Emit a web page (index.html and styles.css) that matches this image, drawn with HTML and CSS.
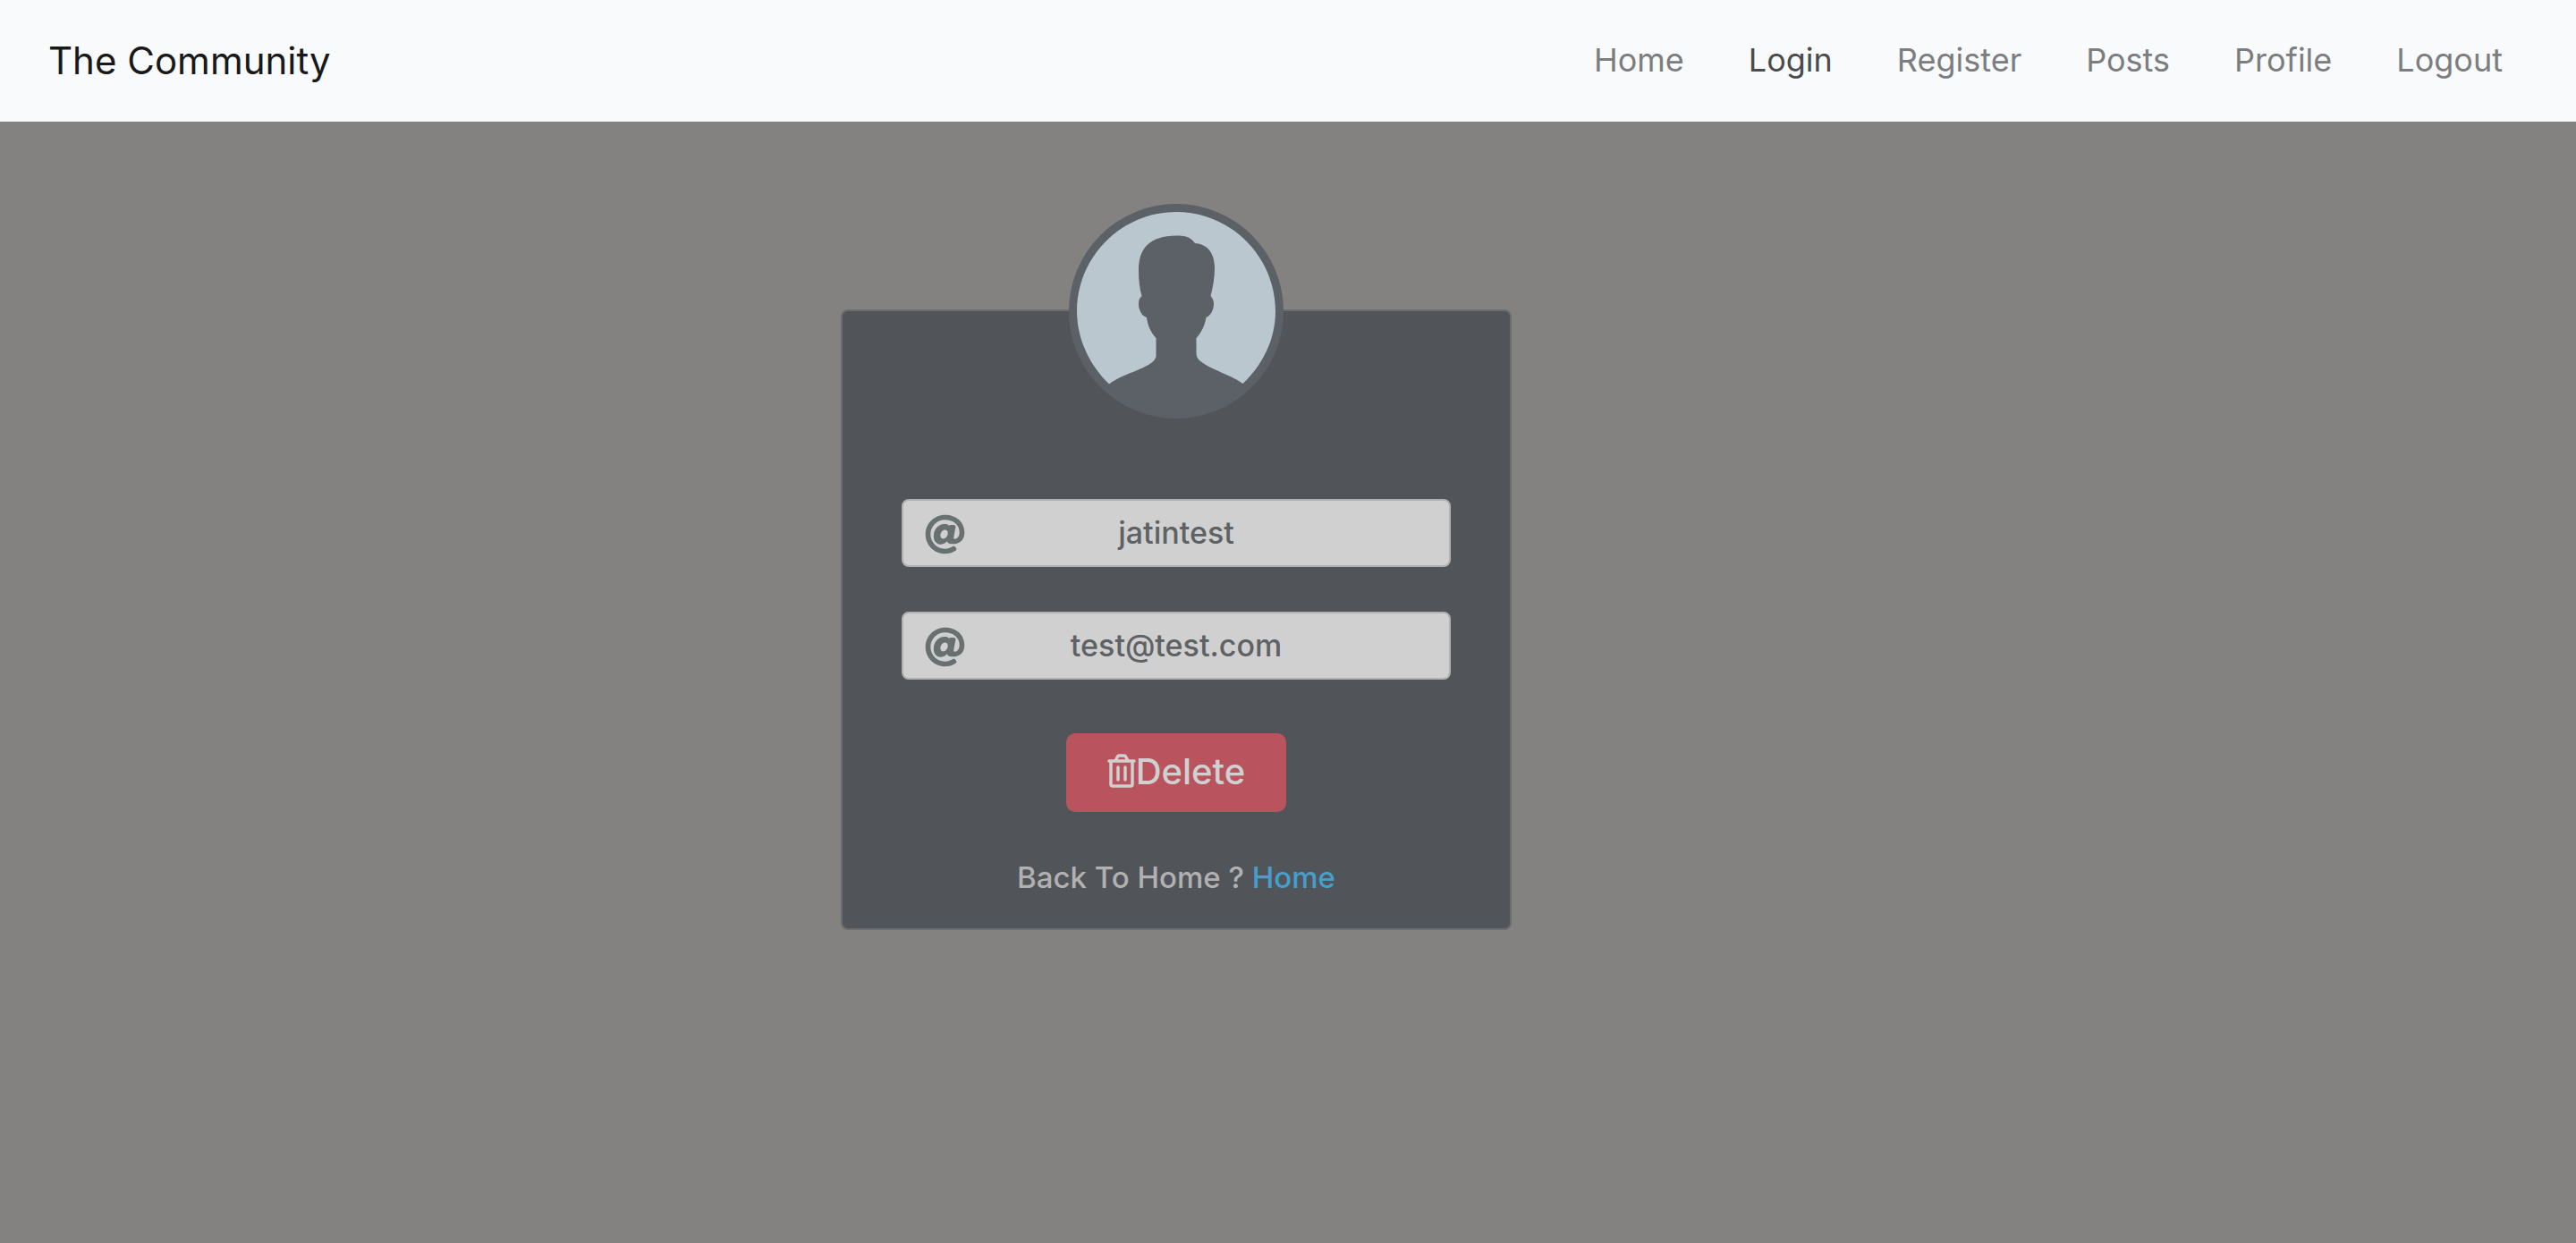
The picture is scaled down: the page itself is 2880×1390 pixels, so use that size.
FILE: index.html
```html
<!DOCTYPE html>
<html lang="en">
<head>
  <meta charset="utf-8">
  <meta name="viewport" content="width=device-width, initial-scale=1">
  <title>The Community</title>
  <link rel="stylesheet" href="styles.css">
</head>
<body>
  <header class="navbar">
    <a class="brand" href="#">The Community</a>
    <nav class="nav-links">
      <a href="#">Home</a>
      <a class="active" href="#">Login</a>
      <a href="#">Register</a>
      <a href="#">Posts</a>
      <a href="#">Profile</a>
      <a href="#">Logout</a>
    </nav>
  </header>

  <main class="page">
    <form class="card">
      <svg class="avatar" viewBox="0 0 240 240" role="img" aria-label="Profile picture">
        <circle cx="120" cy="120" r="120" fill="#5c6067"/>
        <path fill="#bac7cf" d="M45 201.500C24 181 9 152 9 120C9 59 59 9 120 9C181 9 231 59 231 120C231 152 216 181 194.500 201C181 191 163 187 150 178C144 174 142.500 171 142.500 166V150C148 144 152 136 153.500 127C159 125 162 117 162 112C162 107 160 105 158.500 103C161 93 163 83 163 72C163 55 155 45 141 44C137 38 132 35.500 120 35.500C91 36 78 49 78 74C78 85 79 94 81.500 103C79 105 78 108 78 112C78 118 81 125 87 127C88 136 92 144 97.500 150V170C97 174 94 177 89 180C75 188 59 191 45 201.500Z"/>
      </svg>

      <div class="field">
        <svg class="field-icon" viewBox="0 0 512 512" aria-hidden="true"><path d="M256 8C118.941 8 8 118.919 8 256c0 137.059 110.919 248 248 248 48.154 0 95.342-14.140 135.408-40.223 12.005-7.815 14.625-24.288 5.552-35.372l-10.177-12.433c-7.671-9.371-21.179-11.667-31.373-5.129C325.920 429.757 291.314 440 256 440c-101.458 0-184-82.542-184-184S154.542 72 256 72c100.139 0 184 57.619 184 160 0 38.786-21.093 79.742-58.170 83.693-17.349-.454-16.910-12.857-13.476-30.024l23.433-121.110C394.653 149.750 383.308 136 368.225 136h-44.981a13.518 13.518 0 0 0-13.432 11.993l-.010.092c-14.697-17.901-40.448-21.775-59.971-21.775-74.580 0-137.831 62.234-137.831 151.460 0 65.303 36.785 105.870 96 105.870 26.984 0 57.369-15.637 74.991-38.333 9.522 34.104 40.613 34.104 70.710 34.104C462.609 379.410 504 307.798 504 232 504 95.653 394.023 8 256 8zm-21.680 304.430c-22.249 0-36.070-15.623-36.070-40.771 0-44.993 30.779-72.729 58.630-72.729 22.292 0 35.601 15.241 35.601 40.770 0 45.061-33.875 72.730-58.161 72.730z"/></svg>
        <input type="text" value="jatintest" aria-label="Username" readonly>
      </div>

      <div class="field">
        <svg class="field-icon" viewBox="0 0 512 512" aria-hidden="true"><path d="M256 8C118.941 8 8 118.919 8 256c0 137.059 110.919 248 248 248 48.154 0 95.342-14.140 135.408-40.223 12.005-7.815 14.625-24.288 5.552-35.372l-10.177-12.433c-7.671-9.371-21.179-11.667-31.373-5.129C325.920 429.757 291.314 440 256 440c-101.458 0-184-82.542-184-184S154.542 72 256 72c100.139 0 184 57.619 184 160 0 38.786-21.093 79.742-58.170 83.693-17.349-.454-16.910-12.857-13.476-30.024l23.433-121.110C394.653 149.750 383.308 136 368.225 136h-44.981a13.518 13.518 0 0 0-13.432 11.993l-.010.092c-14.697-17.901-40.448-21.775-59.971-21.775-74.580 0-137.831 62.234-137.831 151.460 0 65.303 36.785 105.870 96 105.870 26.984 0 57.369-15.637 74.991-38.333 9.522 34.104 40.613 34.104 70.710 34.104C462.609 379.410 504 307.798 504 232 504 95.653 394.023 8 256 8zm-21.680 304.430c-22.249 0-36.070-15.623-36.070-40.771 0-44.993 30.779-72.729 58.630-72.729 22.292 0 35.601 15.241 35.601 40.770 0 45.061-33.875 72.730-58.161 72.730z"/></svg>
        <input type="email" value="test@test.com" aria-label="Email" readonly>
      </div>

      <button class="delete" type="button">
        <svg class="trash" viewBox="0 0 32 38" fill="none" stroke="currentColor" stroke-linecap="round" stroke-linejoin="round" aria-hidden="true">
          <path stroke-width="3.500" d="M2 8H30"/>
          <path stroke-width="3.500" d="M9.500 7L11.500 3Q12 2 13 2H19Q20 2 20.500 3L22.500 7"/>
          <path stroke-width="3.500" d="M4 9V34Q4 36 6 36H26Q28 36 28 34V9"/>
          <path stroke-width="3.500" d="M12 15V29M20 15V29"/>
        </svg>Delete
      </button>

      <p class="back">Back To Home ? <a href="#">Home</a></p>
    </form>
  </main>
</body>
</html>
```
FILE: styles.css
```css
* {
  box-sizing: border-box;
}

body {
  margin: 0;
  min-height: 100vh;
  background: #848280;
  font-family: Inter, "Liberation Sans", sans-serif;
}

a {
  text-decoration: none;
}

.navbar {
  display: flex;
  align-items: center;
  justify-content: space-between;
  min-height: 136px;
  padding: 0 82px 2px 54px;
  background: #f8fafc;
}

.brand {
  color: #191919;
  font-size: 42px;
}

.nav-links {
  display: flex;
  gap: 72px;
  font-size: 36px;
}

.nav-links a {
  color: #7c7d7e;
}

.nav-links .active {
  color: #4a4b4c;
}

.page {
  display: flex;
  justify-content: center;
  padding: 210px 250px 80px 0;
}

.card {
  display: flex;
  flex-direction: column;
  align-items: center;
  width: 750px;
  padding: 0 66px 32px;
  background: #515459;
  border: 2px solid #6d6c6f;
  border-radius: 8px;
}

.avatar {
  width: 240px;
  height: 240px;
  margin: -120px 0 90px;
}

.field {
  position: relative;
  width: 100%;
  margin-bottom: 50px;
}

.field-icon {
  position: absolute;
  top: 17px;
  left: 26px;
  width: 45px;
  height: 45px;
  fill: #687070;
}

.field input {
  display: block;
  width: 100%;
  height: 76px;
  padding: 0 80px 2px;
  background: #d0d0d0;
  border: 2px solid #b0b1b4;
  border-radius: 8px;
  color: #5e6265;
  font: 500 34px Inter, "Liberation Sans", sans-serif;
  text-align: center;
}

.delete {
  display: flex;
  align-items: center;
  justify-content: center;
  width: 246px;
  height: 88px;
  margin: 10px 0 48px;
  padding: 0 0 4px;
  background: #b9545e;
  border: 0;
  border-radius: 10px;
  color: #d0d0d0;
  font: 500 40px Inter, "Liberation Sans", sans-serif;
}

.trash {
  width: 32px;
  height: 38px;
}

.back {
  margin: 0;
  color: #b1b1b1;
  font-size: 33px;
  font-weight: 500;
  line-height: 50px;
}

.back a {
  color: #459fca;
}
```
